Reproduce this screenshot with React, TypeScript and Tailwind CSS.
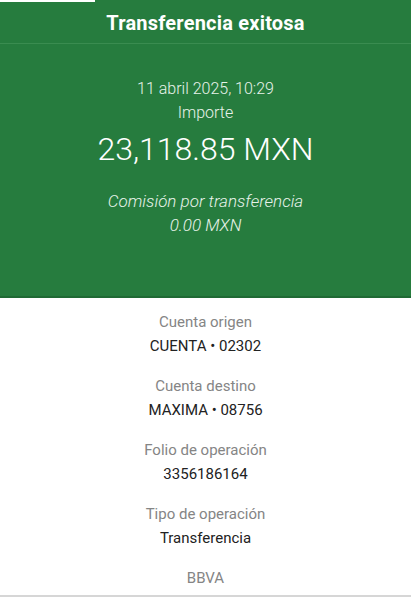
import React from "react";

const font = { fontFamily: "Roboto, 'Noto Sans', sans-serif" };

function Row({ label, value }: { label: string; value: string }) {
  return (
    <div className="flex flex-col items-center">
      <div className="h-[24px] leading-[24px] text-[15px] text-[#858585]">{label}</div>
      <div className="h-[24px] leading-[24px] text-[15px] text-[#222]">{value}</div>
    </div>
  );
}

export default function App() {
  return (
    <div className="relative w-[411px] h-[597px] bg-white overflow-hidden flex flex-col" style={font}>
      <div className="absolute top-0 left-0 w-[95px] h-[2px] bg-white" />
      <div className="bg-[#267c3e] flex flex-col border-b-2 border-[#1f6a34]">
        <div className="h-[44px] flex items-center justify-center border-b border-[#3a8c50]">
          <span className="text-white font-bold text-[20px] tracking-[0.2px] pt-[2px]">Transferencia exitosa</span>
        </div>
        <div className="h-[252px] flex flex-col items-center pt-[33px] text-[#e8f3ea]">
          <div className="h-[24px] leading-[24px] text-[16px] font-light">11 abril 2025, 10:29</div>
          <div className="h-[24px] leading-[24px] text-[16px] font-light">Importe</div>
          <div className="h-[48px] leading-[48px] text-[32px] font-light text-white">23,118.85 MXN</div>
          <div className="h-[24px] leading-[24px] text-[17px] font-light italic mt-[16px]">Comisión por transferencia</div>
          <div className="h-[24px] leading-[24px] text-[17px] font-light italic">0.00 MXN</div>
        </div>
      </div>
      <div className="flex-1 flex flex-col items-center pt-[12px] gap-[16px]">
        <Row label="Cuenta origen" value="CUENTA • 02302" />
        <Row label="Cuenta destino" value="MAXIMA • 08756" />
        <Row label="Folio de operación" value="3356186164" />
        <Row label="Tipo de operación" value="Transferencia" />
        <div className="h-[24px] leading-[24px] text-[15px] text-[#858585]">BBVA</div>
      </div>
      <div className="h-[2px] bg-[#d6d6d6]" />
    </div>
  );
}
